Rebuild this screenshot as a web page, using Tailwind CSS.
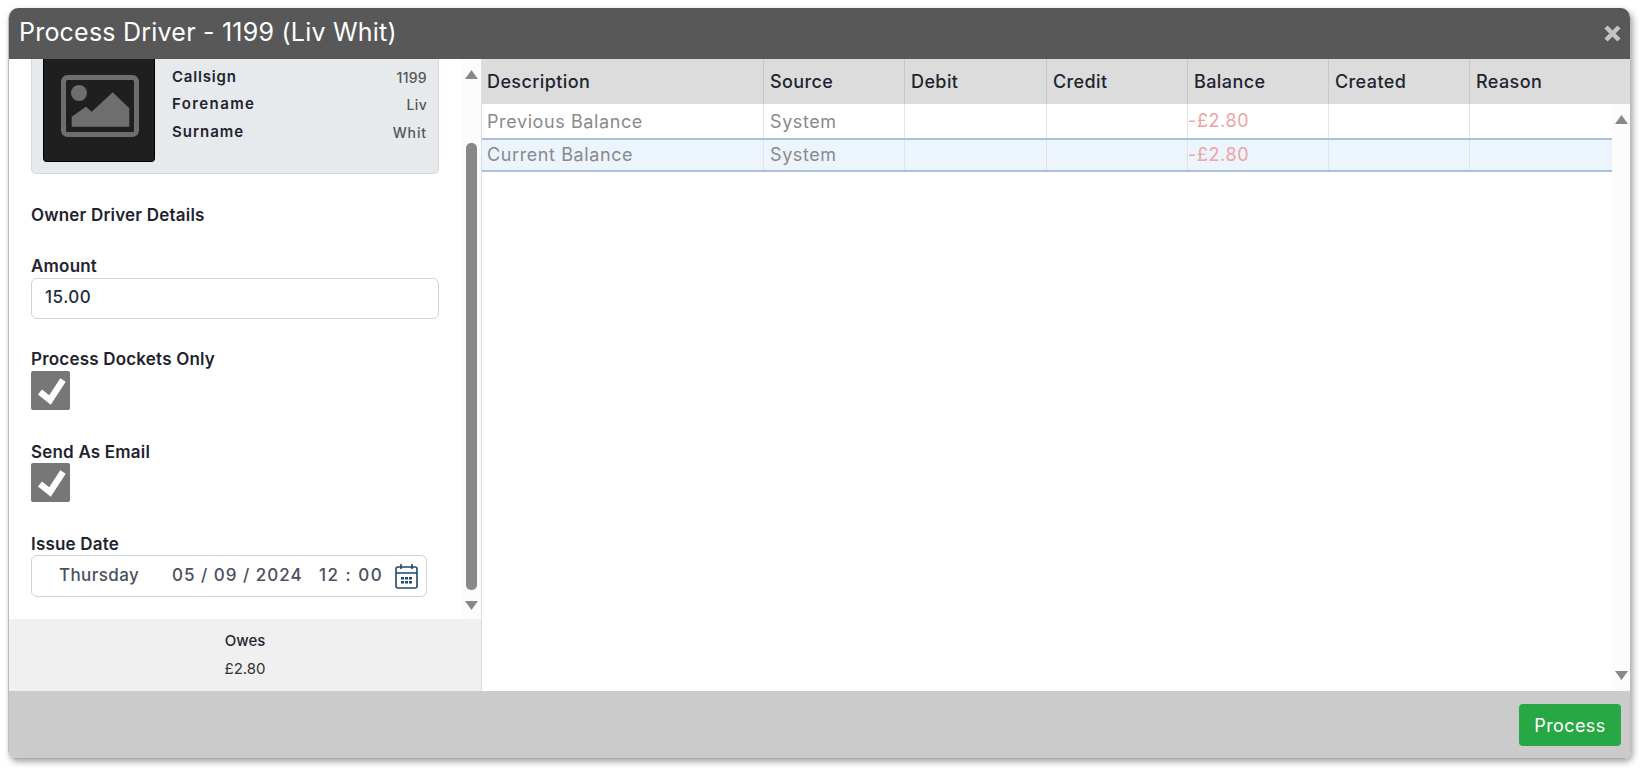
<!DOCTYPE html>
<html lang="en">

<head>
    <meta charset="UTF-8">
    <title>Process Driver</title>
    <script src="https://cdn.jsdelivr.net/npm/@tailwindcss/browser@4"></script>
</head>

<body class="bg-white font-['Inter',sans-serif] h-[773px] overflow-hidden">
    <!-- Dialog -->
    <div class="ml-2 mt-2 w-[1623px] h-[751px] flex flex-col rounded-t-[10px] rounded-b-[8px] overflow-hidden border-l border-r border-[#bbb] shadow-[2px_3px_6px_rgba(0,0,0,0.35)]">

        <!-- Title bar -->
        <div class="h-[51px] shrink-0 bg-[#585858] flex items-center justify-between pl-[10px] pr-[9px]">
            <h1 class="text-[25px] text-white tracking-[0.22px] -mt-[1px]">Process Driver - 1199 (Liv Whit)</h1>
            <svg class="w-[17px] h-[17px]" viewBox="0 0 17 17">
                <path d="M2 2 15 15M15 2 2 15" stroke="#c4c4c4" stroke-width="4.5" />
            </svg>
        </div>

        <!-- Body -->
        <div class="flex-1 flex min-h-0 bg-white">

            <!-- Left panel -->
            <div class="w-[473px] shrink-0 flex flex-col border-r border-[#ddd]">
                <div class="flex-1 flex min-h-0">
                    <div class="w-[453px] shrink-0 pl-[22px] pr-[23px]">
                        <!-- Driver card -->
                        <div class="h-[115px] bg-[#e7eaed] border-b border-x border-[#d5d8dc] rounded-b-[5px] flex pl-[11px] pr-[11px]">
                            <div class="w-[112px] h-[103px] bg-[#1f1f1f] border-x border-b border-black rounded-b-[4px] shrink-0">
                                <svg class="w-[110px] h-[102px]" viewBox="0 0 110 102" fill="none">
                                    <rect x="19.5" y="18.5" width="73" height="57" rx="4" stroke="#6e6e6e" stroke-width="5" />
                                    <circle cx="35" cy="34" r="8" fill="#6e6e6e" />
                                    <path d="M27.7 57.7 42 47.7 47.7 52.7 68.7 33.3 85.3 49.3V67.7H27.7Z" fill="#6e6e6e" />
                                </svg>
                            </div>
                            <div class="flex-1 pl-[17px] pt-[4px] text-[15px]">
                                <div class="h-[28px] flex items-center justify-between"><span class="font-semibold text-[#1f2430] tracking-[0.8px]">Callsign</span><span class="text-[14px] font-medium text-[#555] tracking-[0.3px]">1199</span></div>
                                <div class="h-[27px] flex items-center justify-between"><span class="font-semibold text-[#1f2430] tracking-[1.4px]">Forename</span><span class="text-[14px] font-medium text-[#555] tracking-[0.3px]">Liv</span></div>
                                <div class="h-[28px] flex items-center justify-between"><span class="font-semibold text-[#1f2430] tracking-[1px]">Surname</span><span class="text-[14px] font-medium text-[#555] tracking-[0.9px]">Whit</span></div>
                            </div>
                        </div>

                        <p class="mt-[30px] h-[22px] leading-[22px] text-[17px] font-semibold text-[#1f2430] tracking-[0.2px]">Owner Driver Details</p>

                        <label class="block mt-[29px] h-[22px] leading-[22px] text-[17px] font-semibold text-[#1f2430] tracking-[0.2px]">Amount</label>
                        <input type="text" value="15.00" class="block mt-[1px] w-[408px] h-[41px] border border-[#ced4da] rounded-[6px] px-[13px] pb-[3px] text-[17px] font-medium text-[#1f2d3d] tracking-[0.5px]">

                        <label class="block mt-[29px] h-[22px] leading-[22px] text-[17px] font-semibold text-[#1f2430] tracking-[0.2px]">Process Dockets Only</label>
                        <div class="w-[39px] h-[39px] bg-[#777] rounded-[2px] mt-[1px]">
                            <svg class="w-[39px] h-[39px]" viewBox="0 0 39 39" fill="none"><path d="M9 21 19 29 32 9" stroke="#fff" stroke-width="6.5" /></svg>
                        </div>

                        <label class="block mt-[31px] h-[22px] leading-[22px] text-[17px] font-semibold text-[#1f2430] tracking-[0.2px]">Send As Email</label>
                        <div class="w-[39px] h-[39px] bg-[#777] rounded-[2px]">
                            <svg class="w-[39px] h-[39px]" viewBox="0 0 39 39" fill="none"><path d="M9 21 19 29 32 9" stroke="#fff" stroke-width="6.5" /></svg>
                        </div>

                        <label class="block mt-[31px] h-[22px] leading-[22px] text-[17px] font-semibold text-[#1f2430] tracking-[0.2px]">Issue Date</label>
                        <div class="w-[396px] h-[42px] border border-[#ced4da] rounded-[6px] flex items-center text-[17px] font-medium text-[#4a5160] pl-[27px]">
                            <span class="w-[113px] tracking-[0.4px]">Thursday</span>
                            <span class="w-[147px] whitespace-pre tracking-[1px]">05 / 09 / 2024</span>
                            <span class="w-[76px] whitespace-pre tracking-[1.5px]">12 : 00</span>
                            <svg class="w-[23px] h-[26px]" viewBox="0 0 23 26" fill="none">
                                <rect x="1" y="4" width="21" height="21" rx="2" stroke="#1f4a68" stroke-width="1.6" />
                                <path d="M1 10H22M6 1V6M17 1V6" stroke="#1f4a68" stroke-width="1.6" />
                                <path d="M6 14H9V16.5H6ZM10 14H13V16.5H10ZM14 14H17V16.5H14ZM6 18H9V20.5H6ZM10 18H13V20.5H10ZM14 18H17V20.5H14Z" fill="#1f4a68" />
                            </svg>
                        </div>
                    </div>

                    <!-- Left scrollbar -->
                    <div class="w-[19px] shrink-0 bg-[#fcfcfc] flex flex-col items-center">
                        <svg class="w-[13px] h-[9px] mt-[11px] shrink-0" viewBox="0 0 13 9"><path d="M6.5 0 13 9H0Z" fill="#888" /></svg>
                        <div class="w-[11px] h-[447px] mt-[64px] bg-[#888] rounded-[5px] shrink-0"></div>
                        <svg class="w-[13px] h-[9px] mt-[11px] shrink-0" viewBox="0 0 13 9"><path d="M6.5 9 13 0H0Z" fill="#888" /></svg>
                    </div>
                </div>

                <!-- Owes -->
                <div class="h-[72px] shrink-0 bg-[#f0f0f0] flex flex-col items-center pt-[11px] text-[#333]">
                    <span class="h-[22px] leading-[22px] text-[15px] font-medium text-[#1f2430]">Owes</span>
                    <span class="h-[26px] mt-[4px] leading-[26px] text-[15px]">£2.80</span>
                </div>
            </div>

            <!-- Right panel: ledger table -->
            <div class="flex-1 min-w-0 flex flex-col">
                <div class="h-[45px] shrink-0 bg-[#dcdcdc] grid grid-cols-[282px_141px_142px_141px_141px_141px_1fr] text-[18px] font-medium text-[#1f2430] tracking-[0.4px]">
                    <div class="border-r border-[#c6c6c6] pl-[5px] flex items-center">Description</div>
                    <div class="border-r border-[#c6c6c6] pl-[6px] flex items-center">Source</div>
                    <div class="border-r border-[#c6c6c6] pl-[6px] flex items-center">Debit</div>
                    <div class="border-r border-[#c6c6c6] pl-[6px] flex items-center">Credit</div>
                    <div class="border-r border-[#c6c6c6] pl-[6px] flex items-center">Balance</div>
                    <div class="border-r border-[#c6c6c6] pl-[6px] flex items-center">Created</div>
                    <div class="pl-[6px] flex items-center">Reason</div>
                </div>
                <div class="flex-1 flex min-h-0">
                    <div class="flex-1 min-w-0 text-[18px] text-[#8a8a8a] tracking-[0.6px]">
                        <div class="h-[34px] grid grid-cols-[282px_141px_142px_141px_141px_141px_1fr]">
                            <div class="border-r border-[#e2e2e2] pl-[5px] flex items-center">Previous Balance</div>
                            <div class="border-r border-[#e2e2e2] pl-[6px] flex items-center">System</div>
                            <div class="border-r border-[#e2e2e2]"></div>
                            <div class="border-r border-[#e2e2e2]"></div>
                            <div class="border-r border-[#e2e2e2] flex items-center text-[#efa3a3] pb-[2px]">-£2.80</div>
                            <div class="border-r border-[#e2e2e2]"></div>
                            <div></div>
                        </div>
                        <div class="h-[34px] grid grid-cols-[282px_141px_142px_141px_141px_141px_1fr] bg-[#ecf4fd] border-y-2 border-[#a9c1dc]">
                            <div class="border-r border-[#e2e2e2] pl-[5px] pb-[2px] flex items-center">Current Balance</div>
                            <div class="border-r border-[#e2e2e2] pl-[6px] pb-[2px] flex items-center">System</div>
                            <div class="border-r border-[#e2e2e2]"></div>
                            <div class="border-r border-[#e2e2e2]"></div>
                            <div class="border-r border-[#e2e2e2] flex items-center text-[#efa3a3] pb-[2px]">-£2.80</div>
                            <div class="border-r border-[#e2e2e2]"></div>
                            <div></div>
                        </div>
                    </div>
                    <!-- Right scrollbar -->
                    <div class="w-[18px] shrink-0 bg-[#fcfcfc] flex flex-col items-center justify-between pt-[11px] pb-[11px]">
                        <svg class="w-[13px] h-[9px]" viewBox="0 0 13 9"><path d="M6.5 0 13 9H0Z" fill="#888" /></svg>
                        <svg class="w-[13px] h-[9px]" viewBox="0 0 13 9"><path d="M6.5 9 13 0H0Z" fill="#888" /></svg>
                    </div>
                </div>
            </div>
        </div>

        <!-- Footer -->
        <div class="h-[68px] shrink-0 bg-[#cbcbcb] flex items-center justify-end pr-[9px] border-b border-[#aaa]">
            <button class="w-[102px] h-[42px] bg-[#28a745] text-white text-[18px] tracking-[0.4px] rounded-[4px] mt-[1px]">Process</button>
        </div>
    </div>
</body>

</html>
